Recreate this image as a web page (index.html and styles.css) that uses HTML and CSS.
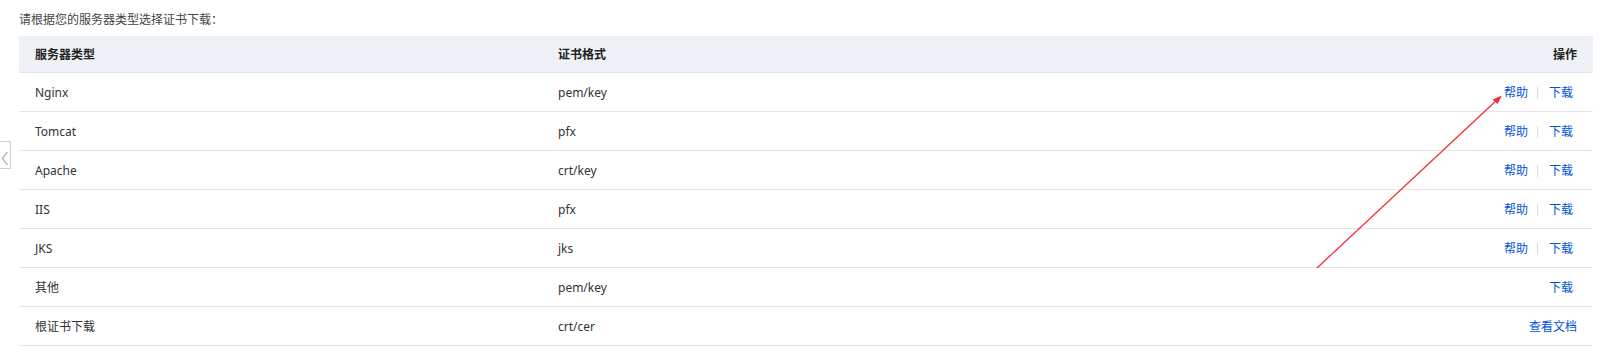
FILE: index.html
```html
<!DOCTYPE html>
<html lang="zh-CN">
<head>
<meta charset="utf-8">
<title>证书下载</title>
<link rel="stylesheet" href="styles.css">
</head>
<body>
<div class="page">
  <p class="intro">请根据您的服务器类型选择证书下载：</p>
  <div class="table">
    <div class="row head">
      <div class="cell">服务器类型</div>
      <div class="cell">证书格式</div>
      <div class="cell act">操作</div>
    </div>
    <div class="row">
      <div class="cell">Nginx</div>
      <div class="cell">pem/key</div>
      <div class="cell act"><span class="links"><a>帮助</a><span class="sep"></span><a>下载</a></span></div>
    </div>
    <div class="row">
      <div class="cell">Tomcat</div>
      <div class="cell">pfx</div>
      <div class="cell act"><span class="links"><a>帮助</a><span class="sep"></span><a>下载</a></span></div>
    </div>
    <div class="row">
      <div class="cell">Apache</div>
      <div class="cell">crt/key</div>
      <div class="cell act"><span class="links"><a>帮助</a><span class="sep"></span><a>下载</a></span></div>
    </div>
    <div class="row">
      <div class="cell">IIS</div>
      <div class="cell">pfx</div>
      <div class="cell act"><span class="links"><a>帮助</a><span class="sep"></span><a>下载</a></span></div>
    </div>
    <div class="row">
      <div class="cell">JKS</div>
      <div class="cell">jks</div>
      <div class="cell act"><span class="links"><a>帮助</a><span class="sep"></span><a>下载</a></span></div>
    </div>
    <div class="row">
      <div class="cell">其他</div>
      <div class="cell">pem/key</div>
      <div class="cell act"><span class="links"><a>下载</a></span></div>
    </div>
    <div class="row">
      <div class="cell">根证书下载</div>
      <div class="cell">crt/cer</div>
      <div class="cell act"><a>查看文档</a></div>
    </div>
  </div>
</div>
<div class="side-handle">
  <svg width="8" height="15" viewBox="0 0 8 15"><path d="M6.5 1 L1.5 7.5 L6.5 14" fill="none" stroke="#bdbdbd" stroke-width="1.6"/></svg>
</div>
<svg class="annot" width="1616" height="362" viewBox="0 0 1616 362">
  <line x1="1317" y1="268" x2="1498" y2="99" stroke="#f0303c" stroke-width="1.3"/>
  <path d="M1502 95.5 L1492.5 99.5 L1497.5 104 Z" fill="#f0303c"/>
</svg>
</body>
</html>
```
FILE: styles.css
```css
html, body {
  margin: 0;
  padding: 0;
  background: #fff;
}
body {
  font-family: "Noto Sans", "Noto Sans CJK SC", sans-serif;
  font-size: 12px;
  color: #333;
  position: relative;
  width: 1616px;
  height: 362px;
  overflow: hidden;
}
.page {
  padding: 10px 23px 0 19px;
}
.intro {
  margin: 0 0 6px;
  line-height: 20px;
  color: #444;
}
.table {
  width: 1574px;
}
.row {
  display: grid;
  grid-template-columns: 523px 523px 1fr;
  box-sizing: border-box;
  height: 39px;
  padding-top: 2px;
  align-items: center;
  border-bottom: 1px solid #e5e5e5;
}
.row.head {
  height: 37px;
  background: #eef1f5;
  font-weight: bold;
  color: #222;
}
.cell {
  padding: 0 16px;
  line-height: 18px;
  white-space: nowrap;
}
.cell.act {
  text-align: right;
}
.links {
  display: inline-flex;
  align-items: center;
  margin-right: 4px;
}
a {
  color: #0052d9;
  cursor: pointer;
}
.sep {
  display: inline-block;
  width: 1px;
  height: 12px;
  background: #dcdcdc;
  margin: 0 11px 0 9px;
}
.side-handle {
  position: absolute;
  left: -1px;
  top: 141px;
  width: 10px;
  height: 26px;
  border: 1px solid #cfcfcf;
  background: #fff;
  display: flex;
  align-items: flex-end;
  justify-content: center;
  padding-bottom: 0;
  box-sizing: content-box;
}
.side-handle svg {
  margin-bottom: 2px;
}
.annot {
  position: absolute;
  left: 0;
  top: 0;
  pointer-events: none;
}
```
